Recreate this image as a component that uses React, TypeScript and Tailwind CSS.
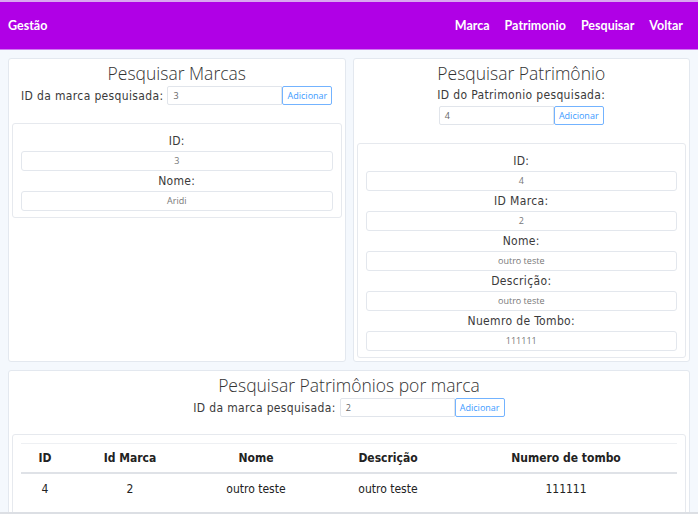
import React from 'react';

const label = "font-['DejaVu_Sans_Condensed','DejaVu_Sans',sans-serif] text-[12px] tracking-[0.35px] text-[#3a3a3a]";
const title = "font-['Open_Sans',sans-serif] font-light text-[17.5px] leading-[22px] text-[#333] text-center";

function SearchInput({ value }: { value: string }) {
  return (
    <div className="flex items-center">
      <div className="w-[115px] h-[19px] border border-[#e1e5eb] rounded-l-[2px] bg-white px-[5px] flex items-center font-['Open_Sans',sans-serif] text-[9px] text-[#666]">
        {value}
      </div>
      <button className="h-[19px] w-[50px] border border-[#73b3ff] rounded-[2px] bg-white font-['Open_Sans',sans-serif] text-[9px] text-[#3d9bff] leading-none">
        Adicionar
      </button>
    </div>
  );
}

function Field({ name, value }: { name: string; value: string }) {
  return (
    <>
      <div className={`${label} h-[20px] flex items-center justify-center`}>{name}</div>
      <div className="h-[20px] border border-[#e3e7ed] rounded-[3px] bg-white flex items-center justify-center font-['Open_Sans',sans-serif] text-[9px] text-[#777]">
        {value}
      </div>
    </>
  );
}

export default function App() {
  return (
    <div className="w-[698px] h-[514px] overflow-hidden bg-[#f4f8fd] border-b-2 border-[#dcdfe4] flex flex-col">
      <nav className="h-[50px] shrink-0 bg-[#b000e6] border-t-2 border-[#d9a6f0] border-b border-b-[#cf7af0] pt-[2px] flex items-center justify-between px-2 font-['Lato',sans-serif] font-bold text-[12.5px] text-white">
        <span>Gestão</span>
        <div className="flex gap-[15px] pr-[7px]">
          <span>Marca</span>
          <span>Patrimonio</span>
          <span>Pesquisar</span>
          <span>Voltar</span>
        </div>
      </nav>

      <div className="px-2 pt-2 flex flex-col gap-[8px]">
        <div className="grid grid-cols-2 gap-[7px]">
          <section className="bg-white border border-[#e3e8ef] rounded-[3px] p-[3px]">
            <h3 className={title}>Pesquisar Marcas</h3>
            <div className="flex items-center justify-center gap-[4px] h-[21px] mt-[1px]">
              <span className={label}>ID da marca pesquisada:</span>
              <SearchInput value="3" />
            </div>
            <div className="mt-[17px] border border-[#e6e9ee] rounded-[3px] px-2 pt-[7px] pb-[6px]">
              <Field name="ID:" value="3" />
              <Field name="Nome:" value="Aridi" />
            </div>
          </section>

          <section className="bg-white border border-[#e3e8ef] rounded-[3px] p-[3px]">
            <h3 className={title}>Pesquisar Patrimônio</h3>
            <div className={`${label} h-[22px] flex items-center justify-center`}>ID do Patrimonio pesquisada:</div>
            <div className="flex justify-center">
              <SearchInput value="4" />
            </div>
            <div className="mt-[18px] border border-[#e6e9ee] rounded-[3px] px-2 pt-[7px] pb-[6px]">
              <Field name="ID:" value="4" />
              <Field name="ID Marca:" value="2" />
              <Field name="Nome:" value="outro teste" />
              <Field name="Descrição:" value="outro teste" />
              <Field name="Nuemro de Tombo:" value="111111" />
            </div>
          </section>
        </div>

        <section className="bg-white border border-[#e3e8ef] rounded-[3px] p-[3px]">
          <h3 className={title}>Pesquisar Patrimônios por marca</h3>
          <div className="flex items-center justify-center gap-[4px] h-[21px] mt-[1px]">
            <span className={label}>ID da marca pesquisada:</span>
            <SearchInput value="2" />
          </div>
          <div className="mt-[16px] border border-[#e6e9ee] rounded-[3px] px-2 pt-[8px] pb-4">
            <table className="w-full table-fixed border-collapse font-['DejaVu_Sans_Condensed','DejaVu_Sans',sans-serif] text-[12px] text-[#222] text-center">
              <colgroup>
                <col className="w-[48px]" />
                <col className="w-[122px]" />
                <col className="w-[130px]" />
                <col className="w-[134px]" />
                <col className="w-[222px]" />
              </colgroup>
              <thead>
                <tr className="border-t border-[#eef0f3] border-b-2 border-b-[#dfe2e7] h-[29px]">
                  <th className="font-bold">ID</th>
                  <th className="font-bold">Id Marca</th>
                  <th className="font-bold">Nome</th>
                  <th className="font-bold">Descrição</th>
                  <th className="font-bold">Numero de tombo</th>
                </tr>
              </thead>
              <tbody>
                <tr className="h-[32px]">
                  <td>4</td>
                  <td>2</td>
                  <td>outro teste</td>
                  <td>outro teste</td>
                  <td>111111</td>
                </tr>
              </tbody>
            </table>
          </div>
        </section>
      </div>
    </div>
  );
}
